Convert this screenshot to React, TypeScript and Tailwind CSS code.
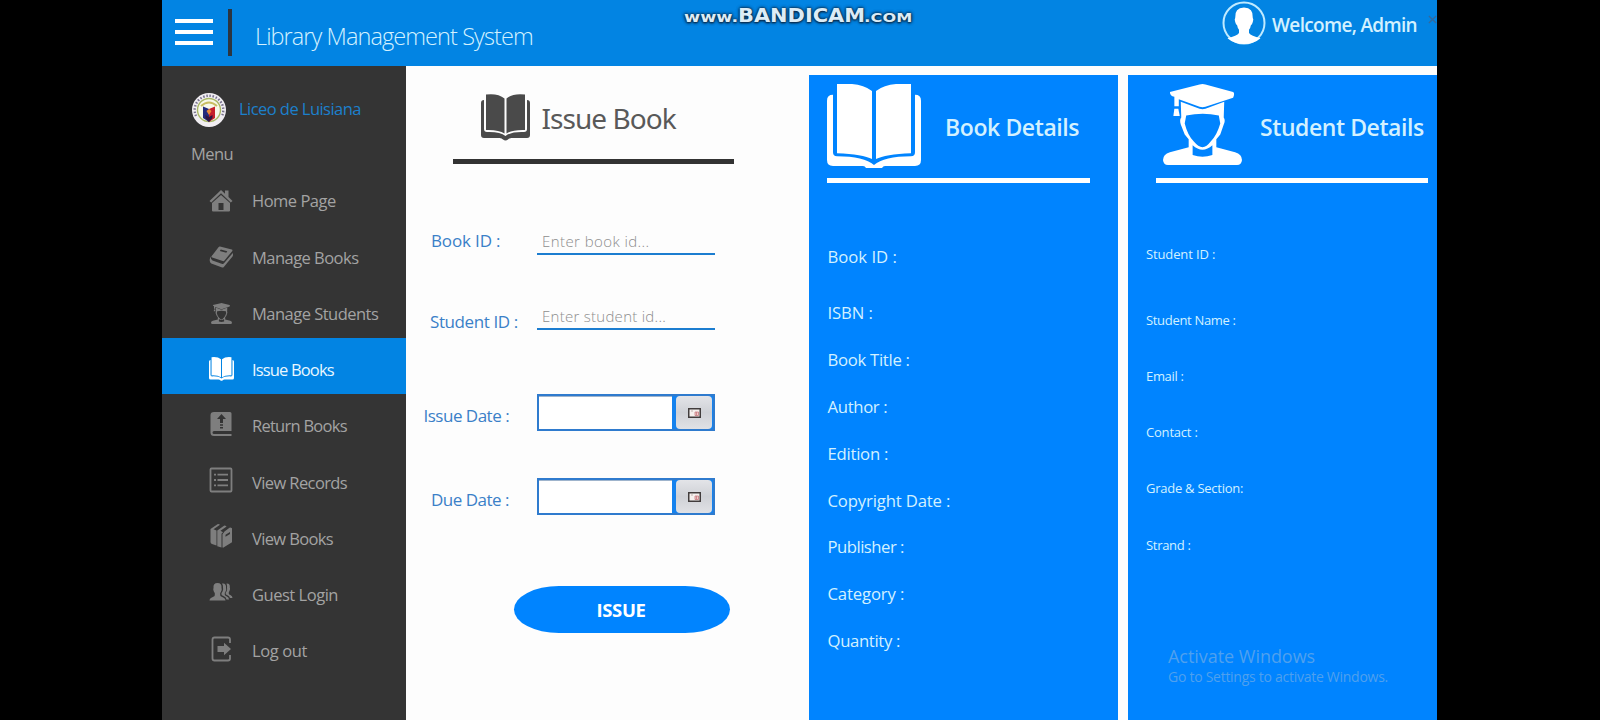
import type { ReactNode } from 'react';

type IconProps = { className?: string };

function OpenBook({ className }: IconProps) {
  return (
    <svg viewBox="0 0 94 86" className={className} fill="currentColor" preserveAspectRatio="none">
      <path d="M10 0h15q12 1 20 7v69q-9-5-35-6z" />
      <path d="M84 0H69q-12 1-20 7v69q9-5 35-6z" />
      <path d="M6 11Q0 11 0 17v60q0 6 6 6h30q2 0 3 2h16q1-2 3-2h30q6 0 6-6V17q0-6-6-6v58q0 4-4 4-27 0-37 9-10-9-37-9-4 0-4-4z" />
    </svg>
  );
}

function SmallOpenBook({ className }: IconProps) {
  return (
    <svg viewBox="0 0 49 47" className={className} fill="currentColor">
      <path d="M5 .5q12-1.500 18.500 4v35q-6-4-18.500-3.500z" />
      <path d="M44 .5q-12-1.500-18.500 4v35q6-4 18.500-3.500z" />
      <path d="M3 6Q0 6 0 9v32q0 3 3 3h15.500q2.500 0 3.500 1.500 2.500 2 5 0 1-1.500 3.500-1.500H46q3 0 3-3V9q0-3-3-3v29q0 3-3 3-13-.5-18.500 4Q19 37.500 6 38q-3 0-3-3z" />
    </svg>
  );
}

function Graduate({ className }: IconProps) {
  return (
    <svg viewBox="0 0 80 82" className={className} fill="currentColor" fillRule="evenodd" preserveAspectRatio="none">
      <path d="M7 8 37 .5q3-.8 6 0L71 8q2 1 0 6L43 23q-3 1-6 0L16 15.500v7h-4.500V13Q7 12 7 8z" />
      <path d="M11.500 25h4l1.500 7.500h-6.500z" />
      <path d="M18 18l19 7q3 1 6 0l19-7-.5 16q2 3 0 7L58 51l-4 5v8l19 5q7 2 7 8-.5 5-5 5H5q-4.500 0-5-5 0-6 7-8l19-5v-8l-4-5-4-10q-1.500-5 .5-7zM23.500 32 22 40q3 12 9 18 5 6 9 6t8.500-6q6-6 9.500-18l-1.500-8q-16-4-33 0zM30 62v10q10 3.500 20 0V62q-10 9-20 0z" />
    </svg>
  );
}

function Home({ className }: IconProps) {
  return (
    <svg viewBox="0 0 24 24" className={className} fill="currentColor" fillRule="evenodd">
      <path d="M12 1 16 4.700V1.500h3.500V8L23.500 12l-1.700 1.500L12 4.200 2.200 13.500.5 12z" />
      <path d="M12 6l9 8v7.500q0 1-1 1H4q-1 0-1-1V14zM9.500 14v7h5v-7z" />
    </svg>
  );
}

function ClosedBook({ className }: IconProps) {
  return (
    <svg viewBox="0 0 24 24" className={className} fill="currentColor" fillRule="evenodd">
      <path d="M11 1.500 22.800 4.400q1 .3.500 1.500L15.500 15.500q-.8.900-1.800.6L3.200 12.600q-1.200-.5-.5-1.500L9.500 2.200q.6-.9 1.500-.7zM11.800 4.500l-1 1.500 6.500 1.700 1-1.500z" />
      <path d="M1.600 11.500Q-.5 17 2.300 18.500l10.800 4q1 .3 1.700-.5l8.700-10.500q.8-1 .3-3.500l-9 10.500q-.6.700-1.500.4L3.500 15.500q-1.800-.8-1.900-4z" />
    </svg>
  );
}

function ReturnBook({ className }: IconProps) {
  return (
    <svg viewBox="0 0 24 26" className={className} fill="currentColor" fillRule="evenodd">
      <path d="M5 1h16q1.500 0 1.500 1.500V20H5q-1.500 0-1.500 1.500T5 23h17.500v2H5q-3.500 0-3.500-3.500V4Q1.500 1 5 1zM12.500 3 8 8h3v4h3V8h3zM11 13.200v1.600h3v-1.600zM11 16v1.600h3V16z" />
    </svg>
  );
}

function Records({ className }: IconProps) {
  return (
    <svg viewBox="0 0 24 26" className={className} fill="none" stroke="currentColor" strokeWidth="1.800">
      <rect x="1.500" y="1.500" width="21" height="23" rx="1" />
      <path d="M5 7.700h2M5 13h2M5 18.300h2M8.500 7.700H19M8.500 13H19M8.500 18.300H19" />
    </svg>
  );
}

function BookStack({ className }: IconProps) {
  return (
    <svg viewBox="0 0 24 26" className={className} fill="currentColor" fillRule="evenodd">
      <path d="M1.500 6 8.500 1.300q.7-.4 1.500 0l1 .5L4.500 6.200 7.500 7.600V22.500L3 21q-1.500-.5-1.500-2z" />
      <path d="M8.300 7.500 15 2.800q.7-.4 1.400 0l1.200.6L11.500 7.700 14 9.200l-1.500 1.600v13.700l-4.200-1.300z" />
      <path d="M15.500 8.500l5-3.800q.7-.4 1.500 0l1 .6v14l-8.500 5.300q-1 .5-1-.6V11.200zM16.500 11.800v2l4.500-2.700v-2z" />
    </svg>
  );
}

function Guests({ className }: IconProps) {
  return (
    <svg viewBox="0 0 24 20" className={className} fill="currentColor">
      <path d="M8.500 1Q13 1 12.500 6q.5 1 0 2.500-.5 1.500-1.300 2.500v2.300q0 1 2 1.700 3.300 1.200 3.300 3.500H.5Q.5 16.200 3.800 15q2-.7 2-1.700V11Q5 10 4.500 8.500 4 7 4.500 6 4 1 8.500 1z" />
      <path d="M13 1.500q4.500-.8 4 4.500.5 1 0 2.500-.4 1.400-1.200 2.300v2q0 .8 1.700 1.400 2.500 1 2.500 3.300h-2.500q-.3-2.500-3.500-3.700-1.500-.5-1.500-1.300V11q1-1 1.500-3 .3-1 0-2 .3-2.800-1-4.500z" />
      <path d="M17.500 1.500q3.800-.3 3.300 4 .5 1 0 2.500-.4 1.300-1 2v1.800q0 .8 1.500 1.300 2.200 1 2.200 3h-2.500q-.5-2-3-3-1.300-.5-1.300-1.300V10.500q1-1 1.300-2.500.3-1 0-2 .3-2.500-.5-4.500z" />
    </svg>
  );
}

function Logout({ className }: IconProps) {
  return (
    <svg viewBox="0 0 24 26" className={className} fill="none" stroke="currentColor" strokeWidth="1.800">
      <path d="M21 7V3.500Q21 1.500 19 1.500H5.500q-2 0-2 2v19q0 2 2 2H19q2 0 2-2V19" />
      <path d="M8.500 10h6.500V6.800l7 6.200-7 6.200V16H8.500z" fill="currentColor" stroke="none" />
    </svg>
  );
}

function Crest() {
  return (
    <svg viewBox="0 0 36 36" className="size-9">
      <circle cx="18" cy="18" r="17" fill="#f1eef2" />
      <path d="M5 24A14.300 14.300 0 1 1 31 24" fill="none" stroke="#77718c" strokeWidth="2.400" strokeDasharray="1.500 1.700" />
      <circle cx="18" cy="18" r="11.500" fill="#f7f8ea" stroke="#a9b765" strokeWidth="1.400" />
      <path d="M10 14q8-7 16 0" fill="none" stroke="#c8bd62" strokeWidth="2" />
      <path d="M12 14.500l6 2.500v13l-6-4z" fill="#232a7c" />
      <path d="M24 14.500l-6 2.500v13l6-4z" fill="#c5202c" />
      <path d="M15.500 19l2.500-2 2.500 2-2.500 4z" fill="#e9883a" />
      <path d="M18 25l3.500-2v3L18 30l-3.500-4v-3z" fill="#31163f" />
    </svg>
  );
}

function Avatar() {
  return (
    <svg viewBox="0 0 44 44" className="size-11">
      <circle cx="22" cy="22" r="20.500" fill="none" stroke="#bfeaff" strokeWidth="2" />
      <path
        d="M22 6.500q9.500 0 8.800 10.500 1 1 0 4-.6 2.500-2 3.500-.3 2.500-1.800 4.300v3.200q2 3 11.500 5.200Q32 43 22 43T5.500 37.200q9.500-2.200 11.500-5.200v-3.200q-1.500-1.800-1.800-4.300-1.400-1-2-3.500-1-3 0-4Q12.500 6.500 22 6.500z"
        fill="#fff"
      />
    </svg>
  );
}

const menu: { label: string; tracking: string; icon: ReactNode; active?: boolean }[] = [
  { label: 'Home Page', tracking: 'tracking-[-0.5px]', icon: <Home className="size-6" /> },
  { label: 'Manage Books', tracking: 'tracking-[-0.53px]', icon: <ClosedBook className="size-6" /> },
  { label: 'Manage Students', tracking: 'tracking-[-0.52px]', icon: <Graduate className="h-[21px] w-[21px]" /> },
  { label: 'Issue Books', tracking: 'tracking-[-0.84px]', icon: <SmallOpenBook className="h-[24px] w-[25px]" />, active: true },
  { label: 'Return Books', tracking: 'tracking-[-0.74px]', icon: <ReturnBook className="mb-1 h-[26px] w-6" /> },
  { label: 'View Records', tracking: 'tracking-[-0.6px]', icon: <Records className="mb-1 h-[26px] w-6" /> },
  { label: 'View Books', tracking: 'tracking-[-0.64px]', icon: <BookStack className="mb-1 h-[26px] w-6" /> },
  { label: 'Guest Login', tracking: 'tracking-[-0.47px]', icon: <Guests className="mb-1 h-5 w-6" /> },
  { label: 'Log out', tracking: 'tracking-[-0.37px]', icon: <Logout className="mb-1 h-[26px] w-6" /> },
];

const bookFields = [
  { label: 'ISBN :', tracking: 'tracking-[-0.1px]' },
  { label: 'Book Title :', tracking: 'tracking-[-0.29px]' },
  { label: 'Author :', tracking: 'tracking-[-0.33px]' },
  { label: 'Edition :', tracking: 'tracking-[-0.25px]' },
  { label: 'Copyright Date :', tracking: 'tracking-[-0.15px]' },
  { label: 'Publisher :', tracking: 'tracking-[-0.51px]' },
  { label: 'Category :', tracking: 'tracking-[-0.14px]' },
  { label: 'Quantity :', tracking: 'tracking-[-0.34px]' },
];

const studentFields = [
  { label: 'Student Name :', tracking: 'tracking-[-0.32px]' },
  { label: 'Email :', tracking: 'tracking-[-0.32px]' },
  { label: 'Contact :', tracking: 'tracking-[-0.2px]' },
  { label: 'Grade & Section:', tracking: 'tracking-[-0.26px]' },
  { label: 'Strand :', tracking: 'tracking-[-0.3px]' },
];

function Header() {
  return (
    <header className="relative flex h-[66px] shrink-0 items-start bg-[#0284e3]">
      <button className="ml-[13px] mt-[19px] flex w-[38px] flex-col gap-[7px]">
        <span className="h-1 w-full bg-white" />
        <span className="h-1 w-full bg-white" />
        <span className="h-1 w-full bg-white" />
      </button>
      <div className="ml-[15px] mt-[9px] h-[47px] w-1 bg-[#2b3540]" />
      <h1 className="ml-[23px] mt-[21px] text-[23.5px] leading-[30px] font-light tracking-[-0.92px] whitespace-nowrap text-[#d3f1ff]">
        Library Management System
      </h1>
      <div className="absolute top-[3px] left-[522px] flex items-baseline font-['DejaVu_Sans',sans-serif] leading-[25px] font-bold whitespace-nowrap text-[#dcecf6] [text-shadow:0_0_3px_#0a2a4a,0_0_3px_#0a2a4a,0_1px_2px_#0a2a4a]">
        <span className="w-[54px] origin-left scale-x-[1.25] text-[14px]">www.</span>
        <span className="w-[126px] origin-left scale-x-[1.1] text-[19px]">BANDICAM</span>
        <span className="origin-left scale-x-[1.24] text-[14px]">.<span className="text-[13px]">COM</span></span>
      </div>
      <div className="ml-auto mt-px flex items-center">
        <Avatar />
        <span className="ml-[6px] mt-[4px] text-[19px] leading-6 font-semibold tracking-[-0.67px] whitespace-nowrap text-[#d3f1ff]">
          Welcome, Admin
        </span>
        <svg viewBox="0 0 10 10" className="-mt-2 ml-[11px] size-[9px] stroke-[#33699c]" strokeWidth="1.500">
          <path d="M1 1l8 8M9 1 1 9" />
        </svg>
      </div>
    </header>
  );
}

function Sidebar() {
  return (
    <aside className="w-[244px] shrink-0 bg-[#343434]">
      <div className="flex h-[74px] items-start pt-[26px] pl-[29px]">
        <Crest />
        <span className="ml-[12px] mt-[5px] text-[16.500px] leading-6 tracking-[-0.55px] whitespace-nowrap text-[#1c80cc]">
          Liceo de Luisiana
        </span>
      </div>
      <div className="h-[29px] pt-[2px] pl-[29px] text-[16.500px] leading-6 tracking-[-0.6px] text-[#a3a3a3]">Menu</div>
      <nav>
        {menu.map((m) => (
          <div
            key={m.label}
            className={
              m.active
                ? 'flex h-[56.250px] items-center bg-[#0284e3] text-white'
                : 'flex h-[56.250px] items-center text-[#7e7e7e]'
            }
          >
            <div className="ml-[46px] mt-[7px] flex w-[26px] justify-center">{m.icon}</div>
            <span
              className={`ml-[18px] mt-[9px] text-[16.500px] whitespace-nowrap ${m.tracking} ${m.active ? 'text-[#e9f7ff]' : 'text-[#a3a3a3]'}`}
            >
              {m.label}
            </span>
          </div>
        ))}
      </nav>
    </aside>
  );
}

function DateField() {
  return (
    <div className="flex h-[37px] w-[178px] border-2 border-[#2f7bce] bg-[#1582ee]">
      <div className="h-full w-[133px] border-t border-[#9fb4cc] bg-white" />
      <button className="ml-1 flex h-[33px] w-[36px] items-center justify-center rounded-[4px] bg-gradient-to-b from-[#e3e4e8] via-[#cfd1d6] to-[#e0e1e5]">
        <svg viewBox="0 0 13 10" className="h-[10px] w-[13px]">
          <rect x=".75" y=".75" width="11.500" height="8.500" fill="#f6f0ee" stroke="#413c3c" strokeWidth="1.500" />
          <path d="M7 4h3.500v3.500H7zM8.500 4v3.500" fill="#f0c9c9" stroke="#c77b80" strokeWidth=".8" />
          <path d="M3 3h2" stroke="#bfb1ae" />
        </svg>
      </button>
    </div>
  );
}

const labelBase = 'text-[17px] leading-6 whitespace-nowrap text-[#3a80c8]';

function IssueForm() {
  return (
    <section className="w-[403px] shrink-0 bg-[#fdfdfd]">
      <div className="ml-[47px] flex h-[93px] w-[281px] items-start pt-[28px]">
        <SmallOpenBook className="ml-[28px] h-[47px] w-[49px] text-[#4a4a4a]" />
        <h2 className="ml-[11.500px] mt-[6px] font-['Noto_Sans',sans-serif] text-[28px] leading-9 tracking-[-0.95px] whitespace-nowrap text-[#595959]">
          Issue Book
        </h2>
      </div>
      <div className="ml-[47px] h-[5px] w-[281px] bg-[#333]" />

      <div className="mt-[64px] flex h-[27px] items-start">
        <span className={`mt-px w-[107px] pl-[25px] tracking-[-0.15px] ${labelBase}`}>Book ID :</span>
        <div className="ml-[24px] h-[27px] w-[178px] border-b-2 border-[#1c7dd0] pl-[5px] text-[15px] leading-[27px] font-light tracking-[0.42px] whitespace-nowrap text-[#8d8d8d]">
          Enter book id...
        </div>
      </div>
      <div className="mt-[48px] flex h-[27px] items-start">
        <span className={`mt-[7px] w-[113px] pl-[24px] tracking-[-0.4px] ${labelBase}`}>Student ID :</span>
        <div className="ml-[18px] h-[27px] w-[178px] border-b-2 border-[#1c7dd0] pl-[5px] text-[15px] leading-[27px] font-light tracking-[0.27px] whitespace-nowrap text-[#8d8d8d]">
          Enter student id...
        </div>
      </div>

      <div className="mt-[64px] flex items-start">
        <span className={`mt-[10px] w-[131px] pl-[17.500px] tracking-[-0.5px] ${labelBase}`}>Issue Date :</span>
        <DateField />
      </div>
      <div className="mt-[47px] flex items-start">
        <span className={`mt-[10px] w-[131px] pl-[25px] tracking-[-0.5px] ${labelBase}`}>Due Date :</span>
        <DateField />
      </div>

      <button className="mt-[71px] ml-[107.500px] flex h-[47px] w-[216px] items-center justify-center rounded-[45px/23.500px] bg-[#0084ff] pr-px text-[18.500px] font-bold tracking-[-0.37px] text-white">
        ISSUE
      </button>
    </section>
  );
}

function BookDetails() {
  return (
    <section className="mt-[9px] w-[309px] shrink-0 bg-[#0084ff] pl-[18px] text-[#d3f1ff]">
      <div className="flex h-[103px] items-start pt-[9px]">
        <OpenBook className="h-[85px] w-[94px] text-white" />
        <h2 className="ml-[24px] mt-[28px] text-[23px] leading-[30px] font-semibold tracking-[-0.4px] whitespace-nowrap">
          Book Details
        </h2>
      </div>
      <div className="h-[5px] w-[263px] bg-white" />
      <div className="mt-[62px] pl-[.5px] text-[16.700px] leading-6">Book ID :</div>
      <div className="mt-[32px] flex flex-col gap-[22.900px] pl-[.5px] text-[16.700px] leading-6">
        {bookFields.map((f) => (
          <div key={f.label} className={f.tracking}>
            {f.label}
          </div>
        ))}
      </div>
    </section>
  );
}

function StudentDetails() {
  return (
    <section className="relative mt-[9px] ml-[10px] w-[309px] shrink-0 bg-[#0084ff] pl-[18px] text-[#d3f1ff]">
      <div className="flex h-[103px] items-start pt-[9px] pl-[17px]">
        <Graduate className="h-[81px] w-[79px] text-white" />
        <h2 className="ml-[18px] mt-[28px] text-[23px] leading-[30px] font-semibold tracking-[-0.43px] whitespace-nowrap">
          Student Details
        </h2>
      </div>
      <div className="ml-[10px] h-[5px] w-[272px] bg-white" />
      <div className="mt-[61px] text-[13px] leading-5 tracking-[-0.13px]">Student ID :</div>
      <div className="mt-[45.500px] flex flex-col gap-[36.250px] text-[13px] leading-5">
        {studentFields.map((f) => (
          <div key={f.label} className={f.tracking}>
            {f.label}
          </div>
        ))}
      </div>
      <div className="absolute top-[569px] left-[40px] whitespace-nowrap text-[#4fa0ee]">
        <div className="text-[18px] leading-6 tracking-[-0.04px]">Activate Windows</div>
        <div className="text-[14px] leading-[18px] tracking-[-0.27px]">Go to Settings to activate Windows.</div>
      </div>
    </section>
  );
}

export default function App() {
  return (
    <div className="flex h-[720px] w-[1600px] justify-start overflow-hidden bg-black pl-[162px] font-['Open_Sans',sans-serif]">
      <div className="flex w-[1275px] flex-col bg-[#fdfdfd]">
        <Header />
        <div className="flex min-h-0 flex-1">
          <Sidebar />
          <IssueForm />
          <BookDetails />
          <StudentDetails />
        </div>
      </div>
    </div>
  );
}
